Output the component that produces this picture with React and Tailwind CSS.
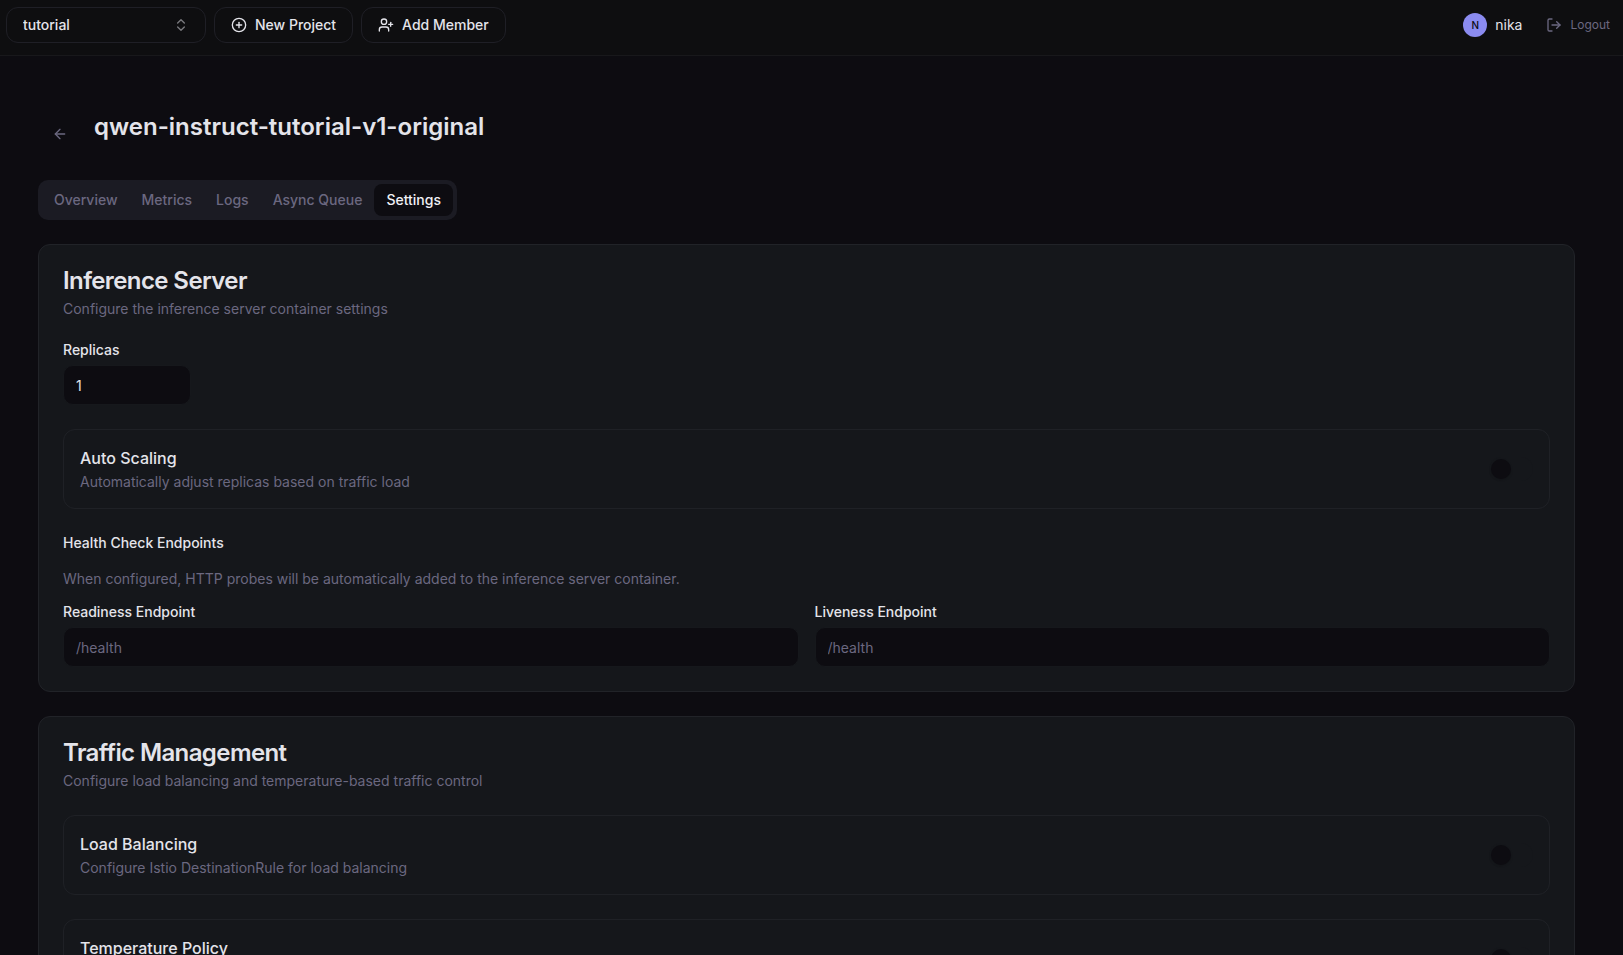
import React, { useState } from 'react'
import { ArrowLeft, ChevronsUpDown, CirclePlus, LogOut, UserPlus } from 'lucide-react'

const tabs = ['Overview', 'Metrics', 'Logs', 'Async Queue', 'Settings']

const Card = ({ title, description, children }) => {
    return (
        <section className="rounded-xl border border-[#212328] bg-[#15171b]">
            <div className="flex flex-col gap-1.5 p-6">
                <h2 className="text-2xl leading-none font-semibold tracking-tight">{title}</h2>
                <p className="text-sm text-[#6b6880]">{description}</p>
            </div>
            <div className="flex flex-col gap-6 px-6 pb-6">{children}</div>
        </section>
    )
}

const ToggleRow = ({ id, title, description }) => {
    const [on, setOn] = useState(false)

    return (
        <div className="flex items-center justify-between rounded-xl border border-[#1f2126] p-4">
            <div className="flex min-h-[46px] flex-col gap-0.5">
                <label htmlFor={id} className="text-base font-medium">{title}</label>
                {description && <p className="text-sm text-[#6b6880]">{description}</p>}
            </div>
            <input
                id={id}
                type="checkbox"
                role="switch"
                checked={on}
                onChange={(e) => setOn(e.target.checked)}
                className="h-6 w-11 shrink-0 cursor-pointer appearance-none rounded-full border-2 border-transparent bg-[#15171b] before:block before:size-5 before:rounded-full before:bg-[#0d0c11] before:shadow-sm checked:bg-[#8b8bf0] checked:before:translate-x-5"
            />
        </div>
    )
}

const Field = ({ id, label, ...props }) => {
    return (
        <div className="flex flex-col gap-2">
            <label htmlFor={id} className="text-sm leading-none font-medium">{label}</label>
            <input
                id={id}
                className="h-10 w-full rounded-[10px] border border-[#16181c] bg-[#0d0c11] px-3 text-sm placeholder:text-[#6b6880] focus:outline-none"
                {...props}
            />
        </div>
    )
}

const Header = () => {
    return (
        <header className="flex shrink-0 items-center justify-between border-b border-[#18181b] bg-[#0e0e10] pt-[7px] pr-[13px] pb-3 pl-1.5">
            <div className="flex items-center gap-2">
                <div className="relative">
                    <select
                        aria-label="Project"
                        className="h-9 w-[200px] appearance-none rounded-xl border border-[#1f1f26] bg-transparent px-4 text-sm font-medium focus:outline-none"
                    >
                        <option>tutorial</option>
                    </select>
                    <ChevronsUpDown className="pointer-events-none absolute top-2.5 right-[17px] size-4 opacity-50" />
                </div>
                <button className="flex h-9 items-center gap-2 rounded-xl border border-[#1f1f26] px-4 text-sm font-medium">
                    <CirclePlus className="size-4" />
                    New Project
                </button>
                <button className="flex h-9 items-center gap-2 rounded-xl border border-[#1f1f26] px-4 text-sm font-medium">
                    <UserPlus className="size-4" />
                    Add Member
                </button>
            </div>
            <div className="flex items-center gap-6">
                <div className="flex items-center gap-2">
                    <span className="flex size-6 items-center justify-center rounded-full bg-[#8b8bf0] text-[10px] font-medium text-[#0d0c11]">N</span>
                    <span className="text-sm">nika</span>
                </div>
                <button className="flex items-center gap-2 text-xs text-[#6b6880]">
                    <LogOut className="size-4" />
                    Logout
                </button>
            </div>
        </header>
    )
}

export default function App() {
    const [tab, setTab] = useState('Settings')
    const [replicas, setReplicas] = useState('1')

    return (
        <div className="flex h-screen flex-col overflow-hidden bg-[#0d0c11] font-['Inter',sans-serif] text-[#e4e4ea]">
            <Header />
            <main className="min-h-0 flex-1 overflow-hidden pt-12 pr-12 pl-[38px]">
                <div className="flex items-start gap-3">
                    <button aria-label="Back" className="mt-3 flex h-9 w-11 shrink-0 items-center justify-center text-[#6b6880]">
                        <ArrowLeft className="size-4" />
                    </button>
                    <h1 className="mt-[7px] text-2xl font-semibold">qwen-instruct-tutorial-v1-original</h1>
                </div>

                <div role="tablist" className="mt-7 flex h-10 w-fit items-center rounded-[10px] bg-[#1b1b23] p-1">
                    {tabs.map((name) => (
                        <button
                            key={name}
                            role="tab"
                            aria-selected={tab === name}
                            onClick={() => setTab(name)}
                            className={
                                tab === name
                                    ? 'h-8 rounded-lg bg-[#0d0c11] px-3 text-sm font-medium text-[#f0f0f5]'
                                    : 'h-8 rounded-lg px-3 text-sm font-medium text-[#6b6880]'
                            }
                        >
                            {name}
                        </button>
                    ))}
                </div>

                <div className="mt-6 flex flex-col gap-6">
                    <Card title="Inference Server" description="Configure the inference server container settings">
                        <div className="w-32">
                            <Field id="replicas" label="Replicas" value={replicas} onChange={(e) => setReplicas(e.target.value)} />
                        </div>
                        <ToggleRow
                            id="auto-scaling"
                            title="Auto Scaling"
                            description="Automatically adjust replicas based on traffic load"
                        />
                        <div className="flex flex-col gap-4">
                            <h3 className="text-sm font-medium">Health Check Endpoints</h3>
                            <p className="text-sm text-[#6b6880]">
                                When configured, HTTP probes will be automatically added to the inference server container.
                            </p>
                            <div className="grid grid-cols-2 gap-4">
                                <Field id="readiness" label="Readiness Endpoint" placeholder="/health" />
                                <Field id="liveness" label="Liveness Endpoint" placeholder="/health" />
                            </div>
                        </div>
                    </Card>

                    <Card title="Traffic Management" description="Configure load balancing and temperature-based traffic control">
                        <ToggleRow
                            id="load-balancing"
                            title="Load Balancing"
                            description="Configure Istio DestinationRule for load balancing"
                        />
                        <ToggleRow id="temperature-policy" title="Temperature Policy" />
                    </Card>
                </div>
            </main>
        </div>
    )
}
